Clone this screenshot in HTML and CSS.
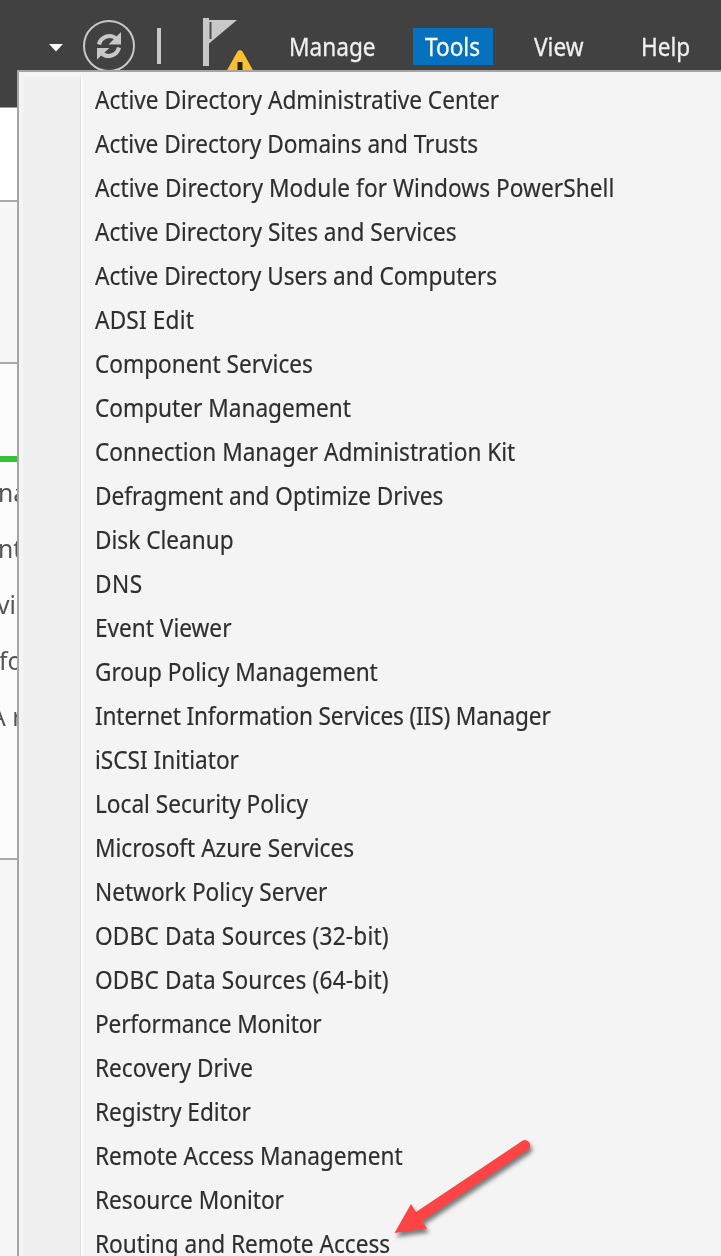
FILE: index.html
```html
<!DOCTYPE html>
<html lang="en">
<head>
<meta charset="utf-8">
<title>Server Manager</title>
<link rel="stylesheet" href="styles.css">
</head>
<body>
<div class="window">
  <header class="toolbar">
    <svg class="toolbar-icons" width="270" height="72" viewBox="0 0 270 72">
      <path d="M49 44H63L56 51.5Z" fill="#fff"/>
      <circle cx="109" cy="46" r="25" fill="none" stroke="#c8c8c8" stroke-width="2"/>
      <g fill="none" stroke="#c8c8c8" stroke-width="4.2">
        <path d="M99 44.500C101 36 111 33.500 116.500 39"/>
        <path d="M119 47.500C117 56 107 58.500 101.500 53"/>
      </g>
      <path d="M121 32V44.500H108.500L113 40Z" fill="#c8c8c8"/>
      <path d="M97 59.500V48H109.500L105 52Z" fill="#c8c8c8"/>
      <rect x="157" y="28" width="4" height="36" fill="#c8c8c8"/>
      <rect x="203" y="18" width="6" height="48" fill="#c8c8c8"/>
      <path d="M209 20H237L209 43.500Z" fill="#c8c8c8"/>
      <rect x="209.500" y="22" width="2" height="17" fill="#4c4c4c"/>
      <path d="M226 72L237.500 51.500Q240 48.500 242.500 51.500L254 72Z" fill="#fbbf30"/>
      <path d="M237.500 62H242.500V72H237.500Z" fill="#2b2308"/>
    </svg>
    <nav class="menubar">
      <div class="menubar-item"><span>Manage</span></div>
      <div class="menubar-item active"><span>Tools</span></div>
      <div class="menubar-item view"><span>View</span></div>
      <div class="menubar-item"><span>Help</span></div>
    </nav>
  </header>
  <main class="page">
    <section class="band band-top"></section>
    <section class="band band-mid"></section>
    <section class="band band-tile">
      <div class="tile-accent"></div>
      <div class="tile-line">na</div>
      <div class="tile-line">nt</div>
      <div class="tile-line shift-v">vi</div>
      <div class="tile-line shift-f">fo</div>
      <div class="tile-line shift-a">A r</div>
    </section>
    <section class="band band-end"></section>
  </main>
  <div class="menu">
    <div class="menu-gutter"></div>
    <ul class="menu-list">
      <li>Active Directory Administrative Center</li>
      <li class="snug">Active Directory Domains and Trusts</li>
      <li class="loose">Active Directory Module for Windows PowerShell</li>
      <li>Active Directory Sites and Services</li>
      <li class="snug">Active Directory Users and Computers</li>
      <li class="wide">ADSI Edit</li>
      <li>Component Services</li>
      <li>Computer Management</li>
      <li>Connection Manager Administration Kit</li>
      <li class="snug">Defragment and Optimize Drives</li>
      <li>Disk Cleanup</li>
      <li class="widest">DNS</li>
      <li>Event Viewer</li>
      <li>Group Policy Management</li>
      <li class="tight">Internet Information Services (IIS) Manager</li>
      <li>iSCSI Initiator</li>
      <li>Local Security Policy</li>
      <li>Microsoft Azure Services</li>
      <li>Network Policy Server</li>
      <li class="wide">ODBC Data Sources (32-bit)</li>
      <li class="wide">ODBC Data Sources (64-bit)</li>
      <li class="tight">Performance Monitor</li>
      <li>Recovery Drive</li>
      <li>Registry Editor</li>
      <li>Remote Access Management</li>
      <li>Resource Monitor</li>
      <li>Routing and Remote Access</li>
    </ul>
  </div>
  <svg class="arrow" width="160" height="116" viewBox="380 1130 160 116">
    <path d="M394.500 1233L411 1204L416 1212L522 1141A5.200 5.200 0 0 1 528 1149.500L422 1221L427 1228.500Z" fill="#fd4444"/>
  </svg>
</div>
</body>
</html>
```
FILE: styles.css
```css
* { box-sizing: border-box; }

body {
  margin: 0;
  font-family: "Noto Sans", "Open Sans", sans-serif;
  background: #fff;
}

.window {
  position: relative;
  width: 721px;
  height: 1256px;
  overflow: hidden;
}

.toolbar {
  display: flex;
  height: 108px;
  background: #414141;
  border-bottom: 1px solid #999;
}

.toolbar-icons { flex: none; }

.menubar {
  display: grid;
  grid-template-columns: 136px 80px 136px 93px;
  height: 36px;
  margin-top: 28px;
  margin-left: 7px;
}

.menubar-item {
  padding-left: 12px;
  font-size: 25px;
  line-height: 37px;
  white-space: nowrap;
  color: #f0f0f0;
  -webkit-text-stroke: 0.3px currentColor;
}

.menubar-item span {
  display: inline-block;
  transform: scaleX(0.905);
  transform-origin: 0 0;
}

.menubar-item.view { padding-left: 41px; }

.menubar-item.active { background: #0672bf; color: #fff; }

.band { border-bottom: 2px solid #aaa; overflow: hidden; }
.band-top { height: 94px; background: #fff; }
.band-mid { height: 162px; background: #f7f7f7; }
.band-tile { height: 496px; padding-top: 92px; background: #fcfcfc; }
.band-end { height: 396px; background: #f7f7f7; border: 0; }

.tile-accent { height: 6px; margin-bottom: 2px; background: #36c136; }

.tile-line {
  height: 56px;
  margin-left: -2px;
  font-size: 26px;
  line-height: 56px;
  white-space: pre;
  color: #555;
  transform: scaleX(0.95);
  transform-origin: 0 0;
}

.shift-v { margin-left: -3px; }
.shift-f { margin-left: -1px; }
.shift-a { margin-left: -10px; }

.menu {
  position: absolute;
  left: 17px;
  top: 70px;
  width: 720px;
  height: 1200px;
  display: flex;
  padding: 5px 0 0 4px;
  background: #f4f4f4;
  border: 2px solid #a5a5a5;
}

.menu-gutter {
  width: 58px;
  background: #f0f0f0;
  border-right: 1px solid #e1e1e1;
  box-shadow: 2px 0 0 #fcfcfc;
}

.menu-list {
  margin: 0;
  padding: 0 0 0 14px;
  list-style: none;
  transform: scaleX(0.905);
  transform-origin: 14px 0;
}

.menu-list li {
  height: 44px;
  font-size: 25px;
  line-height: 44px;
  white-space: nowrap;
  color: #2e2e2e;
  -webkit-text-stroke: 0.2px currentColor;
}

.menu-list .tight { letter-spacing: -0.16px; }
.menu-list .snug { letter-spacing: -0.05px; }
.menu-list .loose { letter-spacing: 0.07px; }
.menu-list .wide { letter-spacing: 0.2px; }
.menu-list .widest { letter-spacing: 0.6px; }

.arrow {
  position: absolute;
  left: 380px;
  top: 1130px;
  filter: drop-shadow(2px 4px 2px rgba(0, 0, 0, 0.5));
}
```
